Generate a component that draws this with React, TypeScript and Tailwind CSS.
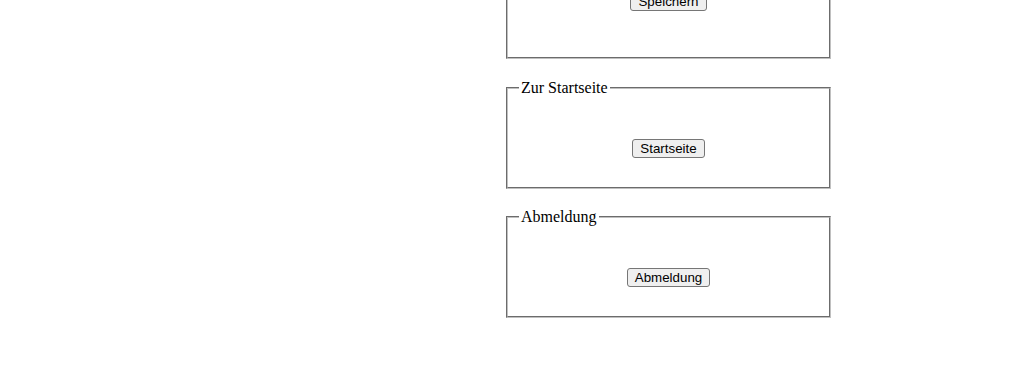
import React from "react";

const btn =
  "inline-block bg-[#efefef] border border-[#767676] rounded-[3px] px-[7px] py-[1px] text-[13.333px] leading-[normal] text-black font-['Arial','Liberation_Sans',sans-serif] hover:bg-[#e5e5e5]";

const fs =
  "block w-[325px] h-[110px] border-2 border-[#c0c0c0] [border-style:groove] px-[11px] mb-[19px]";

const lg = "px-[2px] text-[16px] leading-[normal] text-black font-['Liberation_Serif','Times_New_Roman',serif]";

export default function App() {
  return (
    <div className="w-[1024px] h-[375px] overflow-hidden bg-white font-['Liberation_Serif','Times_New_Roman',serif]">
      <div className="ml-[506px] -mt-[91px]">
        <fieldset className="block w-[325px] h-[150px] border-2 border-[#c0c0c0] [border-style:groove] px-[11px] mb-[20px]">
          <legend className={lg}>Passwort ändern</legend>
          <div className="pt-[62px] text-center">
            <button type="button" className={btn}>Speichern</button>
          </div>
        </fieldset>
        <fieldset className={fs}>
          <legend className={lg}>Zur Startseite</legend>
          <div className="pt-[39px] text-center">
            <button type="button" className={btn}>Startseite</button>
          </div>
        </fieldset>
        <fieldset className={fs}>
          <legend className={lg}>Abmeldung</legend>
          <div className="pt-[39px] text-center">
            <button type="button" className={btn}>Abmeldung</button>
          </div>
        </fieldset>
      </div>
    </div>
  );
}
